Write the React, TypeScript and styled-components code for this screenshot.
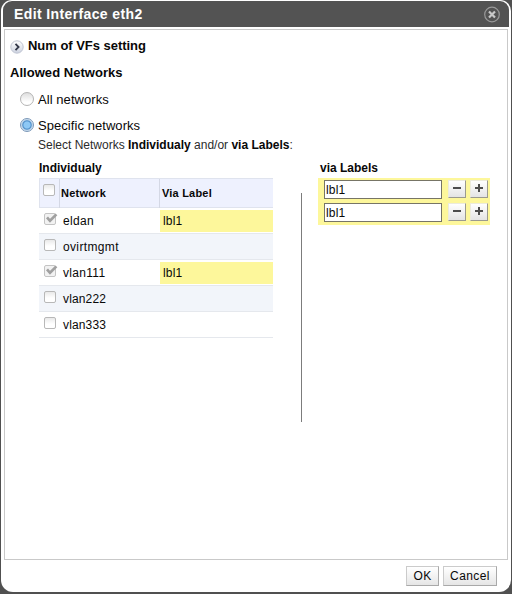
import React from "react";
import styled, { createGlobalStyle } from "styled-components";

const Global = createGlobalStyle`
  * { box-sizing: border-box; }
  html, body { margin: 0; background: #505050; overflow: hidden; }
  body { font-family: "Liberation Sans", Arial, sans-serif; font-size: 12px; color: #080808; }
`;

const Dialog = styled.div`
  width: 510px;
  height: 592px;
  margin-left: 1px;
  padding: 1px 2px 0;
  display: flex;
  flex-direction: column;
  background: #fff;
  border-radius: 11px 11px 12px 12px;
`;

const TitleBar = styled.header`
  height: 26px;
  flex: none;
  display: flex;
  align-items: center;
  justify-content: space-between;
  padding: 0 8px 0 11px;
  background: #535353;
  border-radius: 9px 9px 0 0;
`;

const Title = styled.h1`
  margin: 0;
  font-size: 14px;
  line-height: 26px;
  letter-spacing: 0.38px;
  color: #fff;
`;

const CloseButton = styled.button`
  width: 17px;
  height: 17px;
  padding: 0;
  border: 0;
  background: none;
  display: flex;
`;

const Content = styled.main`
  height: 531px;
  flex: none;
  margin: 2px 1px 0;
  border: 1px solid #c9c9c9;
  padding: 0 0 0 5px;
`;

const Expander = styled.div`
  display: flex;
  align-items: center;
  height: 34px;
  gap: 4px;
`;

const Heading = styled.h2<{ $spacing: number }>`
  margin: 0;
  font-size: 13px;
  line-height: 18px;
  letter-spacing: ${(p) => p.$spacing}px;
`;

const ExpanderTitle = styled(Heading)`
  margin-top: -2px;
`;

const Choice = styled.label<{ $top: number }>`
  display: flex;
  align-items: center;
  height: 16px;
  margin: ${(p) => p.$top}px 0 0 10px;
  gap: 4px;
  font-size: 13px;
  letter-spacing: 0.06px;
  white-space: nowrap;
`;

const Radio = styled.span<{ $on?: boolean }>`
  width: 14px;
  height: 14px;
  border-radius: 50%;
  border: 1px solid ${(p) => (p.$on ? "#7b98b8" : "#b4b4b4")};
  background: ${(p) =>
    p.$on
      ? "radial-gradient(circle at 50% 50%, #8dc8f5 0 3px, #4d8dc8 4.2px, #a9c9e6 5px, #dce9f5 6px)"
      : "linear-gradient(#dedede, #fff 75%)"};
`;

const Hint = styled.p`
  margin: 4px 0 0 28px;
  line-height: 16px;
  color: #2b2b2b;
  white-space: nowrap;
  b { color: #080808; }
`;

const Columns = styled.div`
  display: flex;
  margin: 7px 0 0 29px;
`;

const Individual = styled.section`
  width: 235px;
`;

const Caption = styled.h3`
  margin: 0;
  font-size: 12px;
  line-height: 16px;
`;

const Table = styled.div`
  width: 234px;
  margin-top: 2px;
`;

const Row = styled.div<{ $alt?: boolean }>`
  height: 26px;
  display: grid;
  grid-template-columns: 24px 97px 113px;
  background: ${(p) => (p.$alt ? "#f2f5fa" : "#fff")};
  border-bottom: 1px solid #e5e8ed;
`;

const HeaderRow = styled(Row)`
  height: 30px;
  grid-template-columns: 20px 100px 113px;
  background: #eef1fe;
  border: 1px solid #dfe3ee;
  border-right: 0;
`;

const HeaderCell = styled.div`
  border-right: 1px solid #d4d8e5;
  padding-left: 1px;
  font-size: 11px;
  font-weight: bold;
  line-height: 29px;
  letter-spacing: 0.25px;
  &:last-child { border-right: 0; padding-left: 2px; letter-spacing: 0.2px; }
`;

const CheckCell = styled.div`
  padding: 5px 0 0 5px;
`;

const HeaderCheckCell = styled(CheckCell)`
  padding: 5px 0 0 3px;
  border-right: 1px solid #d4d8e5;
`;

const Name = styled.div<{ $spacing: number }>`
  line-height: 26px;
  letter-spacing: ${(p) => p.$spacing}px;
`;

const LabelCell = styled.div<{ $on: boolean }>`
  height: 22px;
  margin-top: 2px;
  padding-left: 3px;
  line-height: 22px;
  letter-spacing: 0.2px;
  background: ${(p) => (p.$on ? "#fdf79b" : "transparent")};
`;

const Box = styled.span`
  display: block;
  width: 12px;
  height: 12px;
  border: 1px solid #b8b8b8;
  border-radius: 2px;
  background: linear-gradient(#e9e9e9, #fff 60%);
`;

const Divider = styled.div`
  width: 1px;
  height: 229px;
  margin: 33px 16px 0 27px;
  background: #7c7c7c;
`;

const Labels = styled.section`
  width: 172px;
  ${Caption} { margin-left: 2px; }
`;

const LabelList = styled.div`
  width: 172px;
  height: 47px;
  margin-top: 2px;
  padding: 2px 2px 0 6px;
  display: flex;
  flex-direction: column;
  gap: 4px;
  background: #fdf79b;
`;

const LabelRow = styled.div`
  display: flex;
  height: 19px;
`;

const Field = styled.input`
  width: 118px;
  height: 19px;
  margin-right: 6px;
  padding: 0 1px;
  border: 1px solid #777566;
  border-radius: 0;
  background: #fff;
  color: #080808;
  font: 12px "Liberation Sans", Arial, sans-serif;
  letter-spacing: 0.2px;
  outline: 0;
`;

const Square = styled.button`
  width: 18px;
  height: 18px;
  margin-right: 4px;
  padding: 0;
  border: 1px solid;
  border-color: #ecebdc #9b9a8f #9b9a8f #ecebdc;
  background: linear-gradient(#fff, #e4e4e4);
  display: grid;
  place-items: center;
  &:last-child { margin-right: 0; }
`;

const Footer = styled.footer`
  display: flex;
  justify-content: flex-end;
  gap: 4px;
  padding: 6px 12px 0 0;
`;

const Action = styled.button<{ $w: number }>`
  width: ${(p) => p.$w}px;
  height: 20px;
  padding: 0;
  border: 1px solid #b5b5b5;
  border-color: #cbcbcb #a9a9a9 #a9a9a9 #cbcbcb;
  background: linear-gradient(#fff, #e6e6e6);
  color: #080808;
  font: 12px/18px "Liberation Sans", Arial, sans-serif;
  letter-spacing: 0.4px;
`;

const CheckSvg = styled.svg`
  display: block;
`;

const CheckIcon = () => (
  <CheckSvg width="15" height="13" viewBox="0 0 15 13">
    <rect x="0.5" y="0.5" width="11" height="11" rx="1.5" fill="#f2f2f2" stroke="#c4c4c4" />
    <path d="M3 4.4 L6 7.8 L12.4 1.4" fill="none" stroke="#a0a0a0" strokeWidth="2.7" />
  </CheckSvg>
);

const Glyph = ({ plus }: { plus?: boolean }) => (
  <svg width="10" height="10" viewBox="0 0 10 10">
    <path d={plus ? "M1 4h8M5 0v8" : "M1 4h8"} stroke="#4d4d4d" strokeWidth="2" fill="none" />
  </svg>
);

const networks = [
  { name: "eldan", checked: true, spacing: 0.3 },
  { name: "ovirtmgmt", checked: false, spacing: 0.35 },
  { name: "vlan111", checked: true, spacing: 0.3 },
  { name: "vlan222", checked: false, spacing: 0.15 },
  { name: "vlan333", checked: false, spacing: 0.15 },
];

export default function App() {
  return (
    <>
      <Global />
      <Dialog>
        <TitleBar>
          <Title>Edit Interface eth2</Title>
          <CloseButton aria-label="Close">
            <svg width="17" height="17" viewBox="0 0 17 17">
              <circle cx="8" cy="8.5" r="7.3" fill="none" stroke="#999" strokeWidth="1.2" />
              <path d="M5 5.5l6 6M11 5.5l-6 6" stroke="#c8c8c8" strokeWidth="2.2" />
            </svg>
          </CloseButton>
        </TitleBar>
        <Content>
          <Expander>
            <svg width="14" height="14" viewBox="0 0 14 14">
              <defs>
                <linearGradient id="disc" x2="0" y2="1">
                  <stop stopColor="#fff" />
                  <stop offset="1" stopColor="#ccd2e0" />
                </linearGradient>
              </defs>
              <circle cx="7" cy="7" r="6.2" fill="url(#disc)" stroke="#c0c5d2" />
              <path d="M5.5 3.8L8.6 7l-3.1 3.2" fill="none" stroke="#34394a" strokeWidth="1.8" />
            </svg>
            <ExpanderTitle $spacing={-0.03}>Num of VFs setting</ExpanderTitle>
          </Expander>
          <Heading $spacing={0.04}>Allowed Networks</Heading>
          <Choice $top={9}>
            <Radio />
            All networks
          </Choice>
          <Choice $top={10}>
            <Radio $on />
            Specific networks
          </Choice>
          <Hint>
            Select Networks <b>Individualy</b> and/or <b>via Labels</b>:
          </Hint>
          <Columns>
            <Individual>
              <Caption>Individualy</Caption>
              <Table>
                <HeaderRow>
                  <HeaderCheckCell>
                    <Box />
                  </HeaderCheckCell>
                  <HeaderCell>Network</HeaderCell>
                  <HeaderCell>Via Label</HeaderCell>
                </HeaderRow>
                {networks.map((n, i) => (
                  <Row key={n.name} $alt={i % 2 === 1}>
                    <CheckCell>{n.checked ? <CheckIcon /> : <Box />}</CheckCell>
                    <Name $spacing={n.spacing}>{n.name}</Name>
                    <LabelCell $on={n.checked}>{n.checked ? "lbl1" : ""}</LabelCell>
                  </Row>
                ))}
              </Table>
            </Individual>
            <Divider />
            <Labels>
              <Caption>via Labels</Caption>
              <LabelList>
                {[0, 1].map((i) => (
                  <LabelRow key={i}>
                    <Field defaultValue="lbl1" />
                    <Square aria-label="Remove">
                      <Glyph />
                    </Square>
                    <Square aria-label="Add">
                      <Glyph plus />
                    </Square>
                  </LabelRow>
                ))}
              </LabelList>
            </Labels>
          </Columns>
        </Content>
        <Footer>
          <Action $w={33}>OK</Action>
          <Action $w={54}>Cancel</Action>
        </Footer>
      </Dialog>
    </>
  );
}
